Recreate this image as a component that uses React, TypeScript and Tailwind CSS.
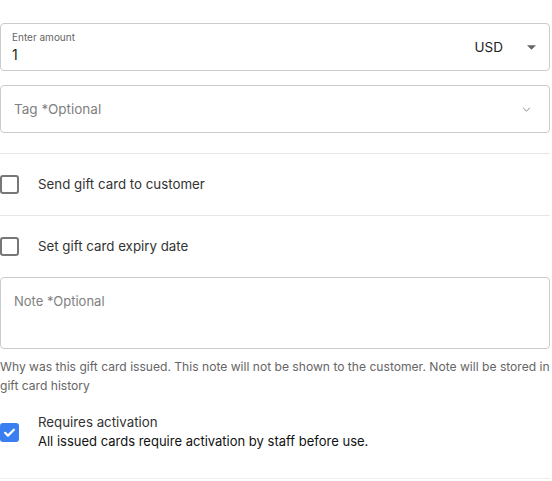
import React from "react";

function Box({ checked }: { checked?: boolean }) {
  if (checked) {
    return (
      <span className="flex size-[19px] flex-none items-center justify-center rounded-[3px] bg-[#3a7ff2]">
        <svg viewBox="0 0 24 24" className="size-[15px]" fill="none" stroke="white" strokeWidth={3.5} strokeLinecap="round" strokeLinejoin="round">
          <path d="M5 12.5l4.5 4.5L19 7.5" />
        </svg>
      </span>
    );
  }
  return <span className="size-[19px] flex-none rounded-[3px] border-2 border-[#777]" />;
}

export default function App() {
  return (
    <div className="bg-white pr-[2px] pt-[23px] font-['Inter',sans-serif] text-[#333]">
      <div className="flex h-[48px] items-center rounded border border-[#cbcbcb] pl-[11px] pr-[13px]">
        <div className="flex flex-1 flex-col">
          <span className="text-[10px] leading-[12px] text-[#666]">Enter amount</span>
          <span className="mt-[4px] text-[14px] leading-[16px] text-[#222]">1</span>
        </div>
        <span className="text-[13.5px] text-[#222]">USD</span>
        <svg viewBox="0 0 10 5" className="ml-[24px] h-[5px] w-[9px]" fill="#666">
          <path d="M0 0h10L5 5z" />
        </svg>
      </div>

      <div className="mt-[14px] flex h-[48px] items-center rounded border border-[#cbcbcb] pl-[13px] pr-[18px]">
        <span className="flex-1 text-[13.5px] text-[#808080]">Tag *Optional</span>
        <svg viewBox="0 0 10 6" className="h-[5px] w-[9px]" fill="none" stroke="#888" strokeWidth={1.2}>
          <path d="M1 1l4 4 4-4" />
        </svg>
      </div>

      <div className="mt-[20px] border-t border-[#e6e6e6]" />
      <label className="flex h-[61px] items-center gap-[19px]">
        <Box />
        <span className="text-[13.3px]">Send gift card to customer</span>
      </label>
      <div className="border-t border-[#e6e6e6]" />
      <label className="flex h-[61px] items-center gap-[19px]">
        <Box />
        <span className="text-[13.3px]">Set gift card expiry date</span>
      </label>

      <div className="h-[72px] rounded border border-[#cbcbcb] px-[13px] pt-[10px]">
        <span className="text-[13px] text-[#808080]">Note *Optional</span>
      </div>
      <p className="mt-[8px] text-[12.1px] leading-[19px] text-[#666]">
        Why was this gift card issued. This note will not be shown to the customer. Note will be stored in gift card history
      </p>

      <div className="mt-[18px] flex items-center gap-[19px]">
        <Box checked />
        <div className="flex flex-col">
          <span className="text-[13.3px] leading-[19px] text-[#333]">Requires activation</span>
          <span className="text-[13px] leading-[19px] text-[#111]">All issued cards require activation by staff before use.</span>
        </div>
      </div>
      <div className="mt-[27px] border-t border-[#eee]" />
    </div>
  );
}
